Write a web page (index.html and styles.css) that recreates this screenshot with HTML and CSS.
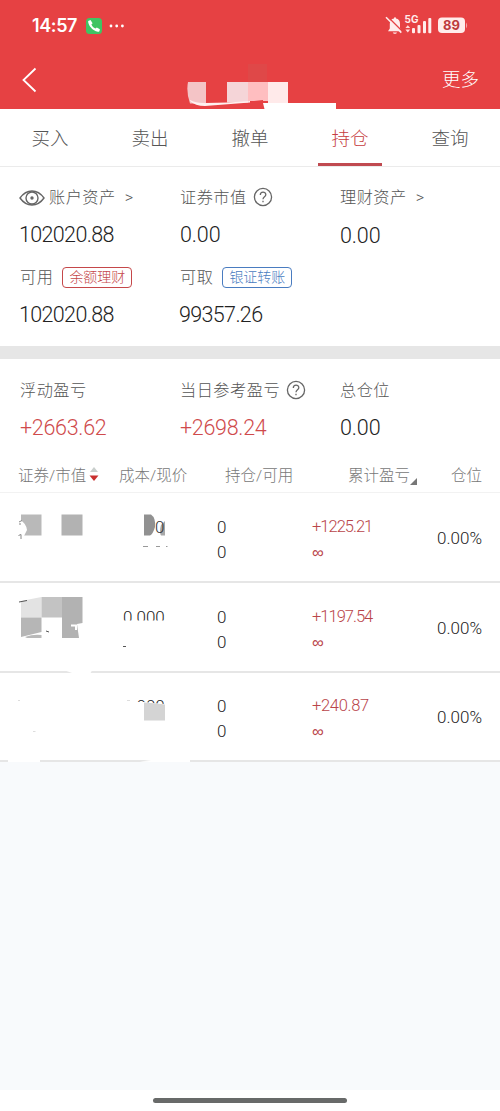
FILE: index.html
```html
<!DOCTYPE html>
<html lang="zh-CN">
<head>
  <meta charset="UTF-8">
  <title>持仓</title>
  <link rel="stylesheet" href="styles.css">
</head>
<body>
  <header class="header">
    <div class="status">
      <span class="time">14:57</span>
      <svg class="phone" width="16" height="16" viewBox="0 0 16 16">
        <rect width="16" height="16" rx="3.5" fill="#3fc463"/>
        <path d="M2.200 3 L4.500 2 L6.600 5.2 L5.4 6.6 C6.2 8.4 7.5 9.8 9.4 10.6 L10.8 9.6 L13.9 11.3 L13.4 13.2 C12.5 14.2 10.3 13.9 7.2 11.8 C3.8 9.2 1.8 5 2.200 3Z" fill="#fff"/>
      </svg>
      <svg class="dots" width="16" height="4" viewBox="0 0 16 4" fill="#fff">
        <circle cx="2" cy="2" r="1.4"/><circle cx="7.7" cy="2" r="1.4"/><circle cx="13.4" cy="2" r="1.4"/>
      </svg>
      <svg class="signal" width="84" height="26" viewBox="0 -3 84 26">
        <path d="M3 16.2 L4.8 13.5 V9 C4.8 5.7 6.3 3.8 9 3.5 C9 1.8 11 1.8 11 3.5 C13.6 3.8 15 5.8 15 9 V13.2 L16.8 16.2Z M7.8 17.4 H12 C11.7 19.3 8.1 19.3 7.8 17.4Z" fill="#ffeceb"/>
        <path d="M2 1 L18 17" stroke="#e64143" stroke-width="1.500"/>
        <path d="M1 2.2 L16.3 17.6" stroke="#ffeceb" stroke-width="1.5"/>
        <text class="net" x="19.500" y="8">5G</text>
        <path d="M20.4 13 L22.8 10.2 L25.2 13Z M20.4 14.5 L22.8 17.5 L25.2 14.5Z" fill="#ffdcdb"/>
        <g fill="#ffeceb">
          <rect x="27" y="13" width="3" height="5.3" rx="1"/>
          <rect x="32.5" y="10" width="3" height="8.3" rx="1"/>
          <rect x="38" y="6" width="3" height="12.3" rx="1"/>
          <rect x="43.3" y="3" width="3" height="15.3" rx="1"/>
          <rect x="53" y="2.500" width="27" height="15.500" rx="4"/>
        </g>
        <path d="M81 7.5 Q83.3 10.5 81 13.5Z" fill="#f3a5a5"/>
        <text class="battery" x="66.5" y="15" text-anchor="middle">89</text>
      </svg>
    </div>
    <div class="titlebar">
      <svg class="back" width="16" height="26" viewBox="0 0 16 26">
        <path d="M14.500 1.5 L2.500 13 L14.500 24.5" fill="none" stroke="#fff" stroke-width="1.8"/>
      </svg>
      <span class="more">更多</span>
    </div>
    <svg class="mask title-mask" width="150" height="50" viewBox="187 60 150 50">
      <rect x="248" y="64" width="19" height="19" fill="#df4848"/>
      <path d="M188 82 H206 V103.5 H190 Q186 92 188 82Z" fill="#f4c4c6"/>
      <rect x="227" y="82" width="21" height="20.5" fill="#f5d5d8"/>
      <rect x="248" y="82" width="20" height="19" fill="#ffbec0"/>
      <rect x="268" y="82" width="20" height="21" fill="#ffeaea"/>
      <path d="M190 100 Q196 103.500 206 103 L228 102.500 L250 101 V102.500 L205 106 Q195 106 190 101Z" fill="#fff0ef"/>
      <path d="M250 101.500 L263 100 V109 H250Z" fill="#e64143"/>
      <path d="M263 103 H336 V109 H264.500Z" fill="#fff"/>
    </svg>
  </header>

  <nav class="tabs">
    <a class="tab">买入</a>
    <a class="tab">卖出</a>
    <a class="tab">撤单</a>
    <a class="tab active">持仓</a>
    <a class="tab">查询</a>
  </nav>

  <section class="assets">
    <div class="cell">
      <div class="label">
        <svg class="eye" width="26" height="18" viewBox="0 0 26 18" fill="none" stroke="#666" stroke-width="1.4">
          <path d="M1 9 Q6 2 13 2 Q20 2 25 9 Q20 16 13 16 Q6 16 1 9Z"/><circle cx="13" cy="9" r="6"/><circle cx="13" cy="9" r="1" fill="#666"/>
        </svg>
        账户资产<span class="arrow">&gt;</span>
      </div>
      <div class="value">102020.88</div>
    </div>
    <div class="cell">
      <div class="label">证券市值
        <svg class="help" width="20" height="20" viewBox="0 0 20 20" fill="none" stroke="#666" stroke-width="1.3">
          <circle cx="10" cy="10" r="8.600"/><path d="M7.300 8 C7.300 4.200 12.800 4.300 12.800 7.700 C12.800 9.700 10 9.800 10 12.200 M10 13.700 V15.200"/>
        </svg>
      </div>
      <div class="value zero">0.00</div>
    </div>
    <div class="cell">
      <div class="label">理财资产<span class="arrow">&gt;</span></div>
      <div class="value zero low">0.00</div>
    </div>
    <div class="cell">
      <div class="label">可用<span class="tag red">余额理财</span></div>
      <div class="value">102020.88</div>
    </div>
    <div class="cell">
      <div class="label">可取<span class="tag blue">银证转账</span></div>
      <div class="value">99357.26</div>
    </div>
  </section>

  <section class="assets profit">
    <div class="cell">
      <div class="label">浮动盈亏</div>
      <div class="value up">+2663.62</div>
    </div>
    <div class="cell">
      <div class="label">当日参考盈亏
        <svg class="help" width="20" height="20" viewBox="0 0 20 20" fill="none" stroke="#666" stroke-width="1.3">
          <circle cx="10" cy="10" r="8.600"/><path d="M7.300 8 C7.300 4.200 12.800 4.300 12.800 7.700 C12.800 9.700 10 9.800 10 12.200 M10 13.700 V15.200"/>
        </svg>
      </div>
      <div class="value up">+2698.24</div>
    </div>
    <div class="cell">
      <div class="label">总仓位</div>
      <div class="value zero">0.00</div>
    </div>
  </section>

  <section class="positions">
    <div class="row head">
      <span>证券/市值<svg class="sort" width="10" height="16" viewBox="0 0 10 16"><path d="M1 6 L5 1 L9 6Z" fill="#c9cfcc"/><path d="M0.500 9.500 H9.500 L5 15Z" fill="#c9302f"/></svg></span>
      <span>成本/现价</span>
      <span>持仓/可用</span>
      <span>累计盈亏<svg class="corner" width="7" height="7" viewBox="0 0 7 7"><path d="M7 0 V7 H0Z" fill="#777"/></svg></span>
      <span class="right">仓位</span>
    </div>

    <div class="row">
      <span></span>
      <span></span>
      <div class="pair"><span>0</span><span>0</span></div>
      <div class="pair gain narrow"><span>+1225.21</span><span class="inf">∞</span></div>
      <span class="right percent">0.00%</span>
      <svg class="mask row-mask" width="200" height="88" viewBox="0 493 200 88">
        <rect x="21" y="514.500" width="20.500" height="21" fill="#b9b9b9"/>
        <path d="M20 520 Q26 523 27 530 L24 536 H20Z" fill="#fff"/>
        <path d="M19 522 L22 520.500 M19 524 H21 M18.500 535.500 L21 534.500 V539" fill="none" stroke="#888" stroke-width="1"/>
        <rect x="61.500" y="514.500" width="21" height="21" fill="#b2b2b2"/>
        <path d="M144 514.500 H151 Q156 518 155 527 Q153 534 150 535.500 H144Z" fill="#919191"/>
        <path d="M165 521 V535.500 H161 Q159 532 161 525Z" fill="#a8a8a8"/>
        <text class="digit" x="155" y="533">0</text>
        <path d="M143 546.500 H148 M156 546.500 H160 M166 546.500 H167.500" stroke="#999" stroke-width="1"/>
      </svg>
    </div>

    <div class="row">
      <span></span>
      <div class="cost">0.000</div>
      <div class="pair"><span>0</span><span>0</span></div>
      <div class="pair gain narrow"><span>+1197.54</span><span class="inf">∞</span></div>
      <span class="right percent">0.00%</span>
      <svg class="mask row-mask second" width="200" height="91" viewBox="0 583 200 91">
        <path d="M21 601 L41.500 597 V617.500 H21Z" fill="#e3e3e3"/>
        <rect x="41.500" y="597" width="20.500" height="20.500" fill="#c3c3c3"/>
        <path d="M62 597 H82.500 V623 L77 624 L79 638 H62Z" fill="#b2b2b2"/>
        <path d="M21 617.500 H41.500 V632 L21 637Z" fill="#b6b6b6"/>
        <path d="M25 637 Q33 634 41.500 635 V638 H27Z" fill="#b9b9b9"/>
        <path d="M71 624.500 H77 V630 H75 V626.500 H71Z" fill="#fff"/>
        <rect x="120" y="620.500" width="50" height="10" fill="#fff"/>
        <path d="M19 602 L27 600.500 M123 646.500 H126 M46 631 L49 632" stroke="#555" stroke-width="1"/>
        <path d="M65 670.500 H92 L90 674 H75Z" fill="#fff"/>
      </svg>
    </div>

    <div class="row">
      <span></span>
      <div class="cost last">0.000</div>
      <div class="pair"><span>0</span><span>0</span></div>
      <div class="pair gain"><span>+240.87</span><span class="inf">∞</span></div>
      <span class="right percent">0.00%</span>
      <svg class="mask row-mask" width="200" height="91" viewBox="0 673 200 91">
        <rect x="120" y="697" width="17" height="20" fill="#fff"/>
        <path d="M137 702 H144 L157 703.500 L166 704 V718 H137Z" fill="#fff"/>
        <path d="M144 702.500 L157 703.500 L165 704.500 V720.500 H144Z" fill="#d4d4d4"/>
        <path d="M127 700.500 H130 M33 731.500 H35.500 M18 700.500 H20" stroke="#ddd" stroke-width="1"/>
        <path d="M8 759.500 H40 V762 H8Z M140 761.500 L155 759.500 H190 V762 H150Z" fill="#fff"/>
      </svg>
    </div>
  </section>

  <footer class="footer"><div class="home"></div></footer>
</body>
</html>
```
FILE: styles.css
```css
* {
  box-sizing: border-box;
}
body {
  margin: 0;
  height: 1111px;
  display: flex;
  flex-direction: column;
  background: #f8fafc;
  font-family: Roboto, "Noto Sans CJK SC", sans-serif;
  font-weight: 300;
  color: #222;
  overflow: hidden;
}
svg {
  display: block;
  flex: none;
}

/* 顶部 */
.header {
  position: relative;
  height: 109px;
  background: #e64143;
  color: #fff;
}
.status {
  display: flex;
  align-items: center;
  height: 51px;
  padding: 0 33px 0 32px;
}
.time {
  width: 46px;
  font: 600 18px/50px Inter, sans-serif;
  letter-spacing: -0.4px;
}
.phone {
  margin-left: 8px;
}
.dots {
  margin-left: 7px;
}
.signal {
  margin-left: auto;
  margin-right: -2px;
  margin-top: -2px;
}
.net {
  font: 700 10px Inter, sans-serif;
  fill: #ffeceb;
}
.battery {
  font: 700 13px Inter, sans-serif;
  fill: #bd3a3d;
}
.titlebar {
  display: flex;
  align-items: center;
  justify-content: space-between;
  height: 58px;
  padding: 0 21px;
}
.more {
  font-size: 18.5px;
  line-height: 58px;
}
.mask {
  position: absolute;
}
.title-mask {
  left: 187px;
  top: 60px;
}

/* 标签 */
.tabs {
  display: grid;
  grid-template-columns: repeat(5, 100px);
  height: 58px;
  background: #fff;
  border-bottom: 1px solid #ebebeb;
}
.tab {
  justify-self: center;
  width: 64px;
  height: 57px;
  text-align: center;
  font-size: 18.5px;
  line-height: 60px;
  color: #555;
}
.active {
  color: #c63c40;
  border-bottom: 3px solid #c04a50;
}

/* 资产 */
.assets {
  display: grid;
  grid-template-columns: repeat(3, 160px);
  row-gap: 13px;
  height: 192px;
  padding: 15px 0 0 20px;
  background: #fff;
  border-bottom: 13px solid #e6e6e6;
  align-content: start;
}
.label {
  display: flex;
  align-items: center;
  height: 30px;
  margin-bottom: 7px;
  padding-top: 1px;
  font-size: 16.2px;
  line-height: 28px;
  letter-spacing: 0.5px;
  color: #555;
  white-space: nowrap;
}
.eye {
  margin: 1px 4px 0 -1px;
}
.help {
  margin: -1px 0 0 6px;
}
.arrow {
  margin-left: 9px;
}
.value {
  height: 30px;
  margin-left: -1px;
  font-size: 21.5px;
  line-height: 31px;
  letter-spacing: -0.65px;
}
.zero {
  margin-left: 0;
  letter-spacing: -0.1px;
}
.low {
  position: relative;
  top: 1px;
}
.up {
  margin-left: 0;
  letter-spacing: -0.3px;
  color: #cf4a4c;
}
.tag {
  height: 21px;
  width: 70px;
  margin-left: 9px;
  margin-top: -1px;
  border: 1px solid;
  border-radius: 4px;
  text-align: center;
  font-size: 14px;
  line-height: 18px;
  letter-spacing: 0;
}
.red {
  color: #c5484a;
}
.blue {
  color: #4a7cc0;
}
.profit {
  height: 99px;
  padding-top: 16px;
  border-bottom: 0;
}

/* 持仓列表 */
.positions {
  background: #fff;
}
.row {
  position: relative;
  display: grid;
  grid-template-columns: 101px 98px 95px 111px 1fr;
  align-items: center;
  height: 90px;
  padding: 0 18px 0 18px;
  border-bottom: 2px solid #e6e6e6;
}
.row:nth-child(4) {
  height: 89px;
  padding-bottom: 1px;
}
.head {
  grid-template-columns: 101px 106px 123px 80px 1fr;
  height: 35px;
  padding-bottom: 3px;
  border-bottom: 1px solid #f2f2f2;
  font-size: 15.5px;
  color: #777;
}
.head span {
  display: flex;
  align-items: center;
  white-space: nowrap;
}
.sort {
  margin-left: 3px;
}
.corner {
  margin: 16px 0 0 0;
}
.head .right {
  justify-content: flex-end;
}
.right {
  text-align: right;
}
.pair {
  display: flex;
  flex-direction: column;
  font-size: 17px;
  line-height: 24.5px;
  padding-top: 5px;
}
.gain {
  color: #b9454a;
  font-size: 16.5px;
  letter-spacing: -0.3px;
}
.narrow {
  letter-spacing: -1px;
}
.inf {
  font-family: "Noto Sans", sans-serif;
}
.percent {
  font-size: 17px;
  letter-spacing: 0;
  padding-top: 2px;
}
.row-mask {
  left: 0;
  top: 0;
}
.second {
  z-index: 1;
}
.digit {
  font-size: 17px;
  fill: #333;
}
.cost {
  align-self: start;
  padding: 22px 0 0 4px;
  font-size: 17px;
  line-height: 24px;
}
.last {
  padding-top: 21px;
}

/* 底部 */
.footer {
  display: flex;
  justify-content: center;
  height: 21px;
  margin-top: auto;
  padding-top: 8px;
  background: #fff;
}
.home {
  width: 194px;
  height: 5px;
  border-radius: 3px;
  background: #686a69;
}
```
